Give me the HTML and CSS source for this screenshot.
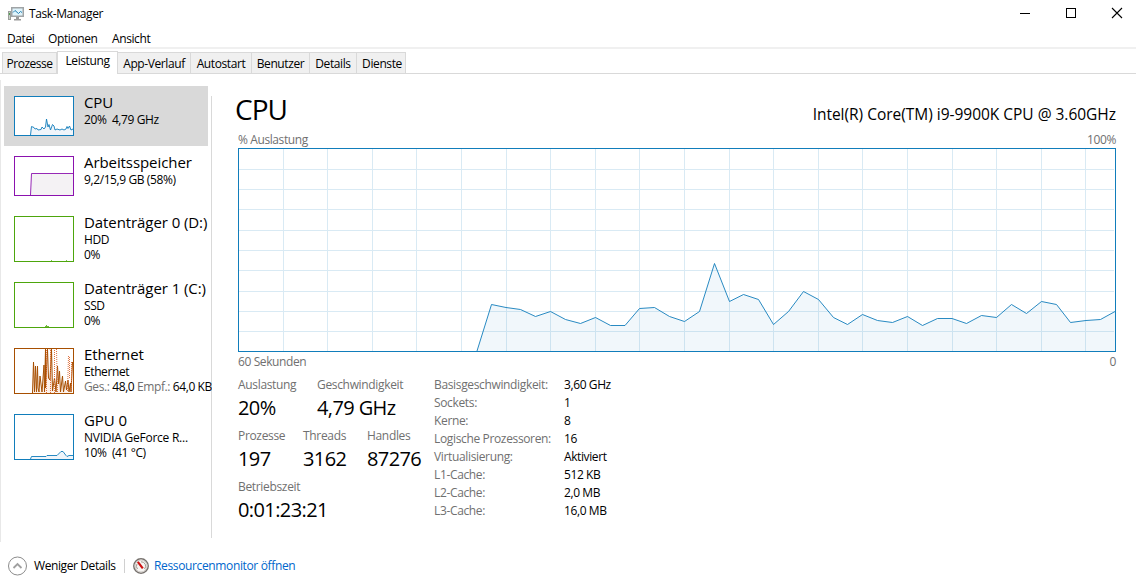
FILE: index.html
```
<!DOCTYPE html>
<html lang="de">
<head>
<meta charset="utf-8">
<title>Task-Manager</title>
<link rel="stylesheet" href="styles.css">
</head>
<body>

<div class="titlebar">
  <svg class="appicon" width="16" height="14" viewBox="0 0 16 14">
    <rect x="0.5" y="4.5" width="2" height="8" fill="#c9cfc9" stroke="#9a9f9a"/>
    <rect x="1" y="6" width="1" height="2" fill="#4fa04f"/>
    <rect x="3.75" y="0.75" width="11.5" height="8.5" fill="#dff3fb" stroke="#a0a4a6" stroke-width="1.5"/>
    <path d="M5 5.5 L7 3.5 L10.5 6.5 L12.5 4.5 L14 5.5" fill="none" stroke="#2582b5"/>
    <path d="M8 10 H11 V12 H13 V13.5 H6 V12 H8 Z" fill="#9a9a9a"/>
  </svg>
  <span class="title">Task-Manager</span>
  <div class="winbuttons">
    <svg width="12" height="12" viewBox="0 0 12 12"><path d="M1 6.5 H11" stroke="#000"/></svg>
    <svg width="12" height="12" viewBox="0 0 12 12"><rect x="1.5" y="1.5" width="9" height="9" fill="none" stroke="#000"/></svg>
    <svg width="12" height="12" viewBox="0 0 12 12"><path d="M1 1 L11 11 M11 1 L1 11" stroke="#000" stroke-width="1.1"/></svg>
  </div>
</div>

<div class="menu">
  <span class="m1">Datei</span>
  <span class="m2">Optionen</span>
  <span class="m3">Ansicht</span>
</div>

<div class="tabs">
  <button class="tab t1">Prozesse</button>
  <button class="tab t2 active">Leistung</button>
  <button class="tab t3">App-Verlauf</button>
  <button class="tab t4">Autostart</button>
  <button class="tab t5">Benutzer</button>
  <button class="tab t6">Details</button>
  <button class="tab t7">Dienste</button>
</div>

<div class="content">
  <div class="sidebar">
    <div class="item selected">
      <svg class="thumb" width="60" height="40" viewBox="0 0 60 40">
        <rect x="0.5" y="0.5" width="59" height="39" fill="#fff"/>
        <path d="M16.5 39 L17.5 30.5 L20 31.5 L21 33 L23 32.5 L24 34 L27 33.5 L28 31 L30 33 L31.5 31 L32.5 23 L34 31 L35 28.5 L36.5 34 L38.5 28.5 L40 30 L41 34 L43 33 L46 34 L48 33 L50 34 L52 33 L53 30.5 L54 32.5 L55.5 30 L57 34 L59 33 V39 Z" fill="#f0f5fa"/>
        <path d="M16.5 39 L17.5 30.5 L20 31.5 L21 33 L23 32.5 L24 34 L27 33.5 L28 31 L30 33 L31.5 31 L32.5 23 L34 31 L35 28.5 L36.5 34 L38.5 28.5 L40 30 L41 34 L43 33 L46 34 L48 33 L50 34 L52 33 L53 30.5 L54 32.5 L55.5 30 L57 34 L59 33" fill="none" stroke="#117dbb" stroke-width="0.9"/>
        <rect x="0.5" y="0.5" width="59" height="39" fill="none" stroke="#117dbb"/>
      </svg>
      <div class="info"><h3>CPU</h3><p>20%&nbsp; 4,79 GHz</p></div>
    </div>
    <div class="item">
      <svg class="thumb" width="60" height="40" viewBox="0 0 60 40">
        <path d="M16.5 39 L17.5 17.5 H59 V39 Z" fill="#f4f2f4"/>
        <path d="M16.5 39 L17.5 17.5 H59" fill="none" stroke="#8b12ae" stroke-width="0.9"/>
        <rect x="0.5" y="0.5" width="59" height="39" fill="none" stroke="#8b12ae"/>
      </svg>
      <div class="info"><h3>Arbeitsspeicher</h3><p>9,2/15,9 GB (58%)</p></div>
    </div>
    <div class="item">
      <svg class="thumb" width="60" height="46" viewBox="0 0 60 46">
        <path d="M37 44.5 H38 M52 44.5 H53" stroke="#4da60c" opacity="0.7"/>
        <rect x="0.5" y="0.5" width="59" height="45" fill="none" stroke="#4da60c"/>
      </svg>
      <div class="info"><h3>Datenträger 0 (D:)</h3><p>HDD</p><p>0%</p></div>
    </div>
    <div class="item">
      <svg class="thumb" width="60" height="46" viewBox="0 0 60 46">
        <path d="M31 44.5 H35 M32.5 43 V45" stroke="#4da60c" opacity="0.8"/>
        <rect x="0.5" y="0.5" width="59" height="45" fill="none" stroke="#4da60c"/>
      </svg>
      <div class="info"><h3>Datenträger 1 (C:)</h3><p>SSD</p><p>0%</p></div>
    </div>
    <div class="item">
      <svg class="thumb" width="60" height="46" viewBox="0 0 60 46">
        <path d="M18 45 L19.5 14 L21 18 L22 44 L23 18 L25 44 L26 28 L28 44 L30 17 L31 30 L32 1 L34 25 L35 32 L36 2 H38 L39 40 L41 44 L43 18 L45 30 L46 44 L48 28 L50 44 L53 34 L55 44 L58 20 V45 Z" fill="#fcf1ea"/>
        <path d="M18.5 45 L19.5 14 L20.5 44 L21.5 18 L22.5 44 L23.5 18 L24 40 L25 44 L26 28 L28 44 L30 17 L30.5 44 L31.5 1 V40 L33.5 1 L34.5 30 L36 32 L37.5 1 L38.5 43 L40.5 30 L42 44 L43.5 18 L44.5 36 L45.5 23 L46.5 44 L48.5 28 L49.5 44 L51.5 33 L52.5 42 L54 32 L55 44 L56.5 35 L57 44 L58.5 14" fill="none" stroke="#a74f01"/>
        <path d="M32.5 45 V1 M36.5 45 V1 H35 M40.5 45 V1 M42.5 1 L43.5 44 M54.5 8 L53.5 44 M55.5 9 V30 M57.5 14 V44" fill="none" stroke="#e0703c" stroke-dasharray="1 1"/>
        <rect x="0.5" y="0.5" width="59" height="45" fill="none" stroke="#a74f01"/>
      </svg>
      <div class="info"><h3>Ethernet</h3><p>Ethernet</p><p><i>Ges.:</i> 48,0 <i>Empf.:</i> 64,0 KB</p></div>
    </div>
    <div class="item">
      <svg class="thumb" width="60" height="46" viewBox="0 0 60 46">
        <path d="M16.5 45 L17.5 42.5 H32 L33 41.5 H43 L47 37.5 H49 L52 41.5 L53 42.5 L55 41.5 H59 V45 Z" fill="#f0f5fa"/>
        <path d="M16.5 45 L17.5 42.5 H32 L33 41.5 H43 L47 37.5 H49 L52 41.5 L53 42.5 L55 41.5 H59" fill="none" stroke="#117dbb" stroke-width="0.9"/>
        <rect x="0.5" y="0.5" width="59" height="45" fill="none" stroke="#117dbb"/>
      </svg>
      <div class="info"><h3>GPU 0</h3><p class="gpu">NVIDIA GeForce R...</p><p>10%&nbsp; (41 °C)</p></div>
    </div>
  </div>

  <div class="main">
    <div class="heading">
      <h1>CPU</h1>
      <span class="model">Intel(R) Core(TM) i9-9900K CPU @ 3.60GHz</span>
    </div>
    <div class="axis top"><span>% Auslastung</span><span>100%</span></div>
    <svg class="chart" width="878" height="204" viewBox="0 0 878 204">
      <path class="grid" d="M45.5 1V203 M89.5 1V203 M134.5 1V203 M178.5 1V203 M223.5 1V203 M268.5 1V203 M312.5 1V203 M357.5 1V203 M401.5 1V203 M446.5 1V203 M491.5 1V203 M535.5 1V203 M580.5 1V203 M624.5 1V203 M669.5 1V203 M714.5 1V203 M758.5 1V203 M803.5 1V203 M847.5 1V203"/>
      <path class="grid" d="M1 21.5H876 M1 41.5H876 M1 61.5H876 M1 82.5H876 M1 102.5H876 M1 122.5H876 M1 143.5H876 M1 163.5H876 M1 183.5H876"/>
      <polygon class="area" points="239,203 253.5,156.5 268,159.5 282.5,161.5 297.5,168.5 312.5,163.5 327.5,171.5 342.5,175.5 357.5,169.5 372.5,177.5 387,177.5 401.5,160.5 416.5,159.5 431.5,168.5 446.5,173.5 461.5,163.5 476.5,115.5 491.5,153.5 505.5,146.5 520.5,151.5 535.5,176.5 550.5,163.5 565.5,143.5 580.5,151.5 595.5,169.5 609.5,176.5 624.5,166.5 639.5,172.5 654.5,174.5 669.5,168.5 684.5,177.5 699.5,170.5 714,170.5 728.5,175.5 743.5,167.5 758.5,169.5 773.5,156.5 788.5,165.5 803.5,153.5 818.5,156.5 832.5,174.5 848,172.5 862.5,171.5 877,163.5 877,203"/>
      <polyline class="line" points="239,203 253.5,156.5 268,159.5 282.5,161.5 297.5,168.5 312.5,163.5 327.5,171.5 342.5,175.5 357.5,169.5 372.5,177.5 387,177.5 401.5,160.5 416.5,159.5 431.5,168.5 446.5,173.5 461.5,163.5 476.5,115.5 491.5,153.5 505.5,146.5 520.5,151.5 535.5,176.5 550.5,163.5 565.5,143.5 580.5,151.5 595.5,169.5 609.5,176.5 624.5,166.5 639.5,172.5 654.5,174.5 669.5,168.5 684.5,177.5 699.5,170.5 714,170.5 728.5,175.5 743.5,167.5 758.5,169.5 773.5,156.5 788.5,165.5 803.5,153.5 818.5,156.5 832.5,174.5 848,172.5 862.5,171.5 877,163.5"/>
      <rect class="frame" x="0.5" y="0.5" width="877" height="203"/>
    </svg>
    <div class="axis bottom"><span>60 Sekunden</span><span>0</span></div>

    <div class="stats">
      <div class="numbers">
        <div class="row">
          <div class="stat w79"><label>Auslastung</label><b>20%</b></div>
          <div class="stat"><label>Geschwindigkeit</label><b>4,79 GHz</b></div>
        </div>
        <div class="row">
          <div class="stat w65"><label>Prozesse</label><b>197</b></div>
          <div class="stat w64"><label>Threads</label><b>3162</b></div>
          <div class="stat"><label>Handles</label><b>87276</b></div>
        </div>
        <div class="row">
          <div class="stat"><label>Betriebszeit</label><b>0:01:23:21</b></div>
        </div>
      </div>
      <dl class="specs">
        <dt>Basisgeschwindigkeit:</dt><dd>3,60 GHz</dd>
        <dt>Sockets:</dt><dd>1</dd>
        <dt>Kerne:</dt><dd>8</dd>
        <dt>Logische Prozessoren:</dt><dd>16</dd>
        <dt>Virtualisierung:</dt><dd>Aktiviert</dd>
        <dt>L1-Cache:</dt><dd>512 KB</dd>
        <dt>L2-Cache:</dt><dd>2,0 MB</dd>
        <dt>L3-Cache:</dt><dd>16,0 MB</dd>
      </dl>
    </div>
  </div>
</div>

<div class="footer">
  <svg width="20" height="20" viewBox="0 0 20 20">
    <circle cx="9.5" cy="10" r="9" fill="#fff" stroke="#8c8c8c"/>
    <path d="M5.5 12 L9.5 8 L13.5 12" fill="none" stroke="#a0a0a0" stroke-width="1.8"/>
  </svg>
  <span class="less">Weniger Details</span>
  <span class="sep"></span>
  <svg class="gauge" width="16" height="16" viewBox="0 0 16 16">
    <circle cx="8" cy="8" r="7.2" fill="#f7f5f3" stroke="#77726e" stroke-width="1.5"/>
    <circle cx="8" cy="8" r="6" fill="none" stroke="#cfcac6"/>
    <path d="M4.5 11 A4.3 4.3 0 0 1 4 6 M8 3.8 A4.3 4.3 0 0 1 11.5 11" fill="none" stroke="#a09a90"/>
    <path d="M4.8 3.8 L9.8 10.4" stroke="#cc1111" stroke-width="2.2"/>
  </svg>
  <a class="resmon">Ressourcenmonitor öffnen</a>
</div>

</body>
</html>
```

FILE: styles.css
```
* {
  box-sizing: border-box;
}

body {
  margin: 0;
  width: 1136px;
  height: 587px;
  overflow: hidden;
  background-color: #fff;
  color: #000;
  font-family: "Open Sans", "Noto Sans", sans-serif;
  font-size: 12px;
  letter-spacing: -0.4px;
  white-space: nowrap;
}

h1, h3, p, dl, dd {
  margin: 0;
  font-weight: normal;
}

/* Title bar */
.titlebar {
  display: flex;
  align-items: center;
  height: 28px;
  padding-left: 8px;
}

.title {
  margin-left: 5px;
  padding-bottom: 1px;
}

.winbuttons {
  display: flex;
  gap: 34px;
  margin-left: auto;
  padding-right: 13px;
  padding-bottom: 2px;
}

.menu {
  display: flex;
  height: 21px;
  padding-left: 7px;
  line-height: 22px;
  border-bottom: 2px solid #f0f0f0;
}

.m1 {
  width: 41px;
}

.m2 {
  width: 64px;
}

/* Tabs */
.tabs {
  display: flex;
  align-items: flex-end;
  height: 25px;
  padding-left: 2px;
  border-bottom: 1px solid #d9d9d9;
}

.tab {
  height: 21px;
  padding: 2px 0 0;
  border: 1px solid #d9d9d9;
  border-left: none;
  border-bottom: none;
  background-color: #f0f0f0;
  color: #000;
  font: inherit;
  letter-spacing: inherit;
  line-height: 18px;
  text-align: center;
}

.tab.active {
  height: 23px;
  margin-bottom: -1px;
  padding: 0 0 4px;
  border-left: 1px solid #d9d9d9;
  background-color: #fff;
}

.t1 {
  width: 55px;
  border-left: 1px solid #d9d9d9;
  letter-spacing: -0.5px;
}

.t2 {
  width: 61px;
}

.t3 {
  width: 73px;
}

.t4 {
  width: 61px;
}

.t5 {
  width: 58px;
}

.t6 {
  width: 47px;
}

.t7 {
  width: 49px;
  padding-left: 2px;
}

.content {
  display: flex;
  height: 468px;
  margin-top: 6px;
}

/* Resource list on the left */
.sidebar {
  width: 212px;
  height: 462px;
  padding: 6px 0 0 3px;
  overflow: hidden;
  border-left: 1px solid #e8e8e8;
  background: linear-gradient(#d9d9d9, #d9d9d9) 210px 16px / 1px 442px no-repeat;
}

.item {
  display: flex;
  align-items: flex-start;
  padding: 10px;
  width: 204px;
}

.item.selected {
  background-color: #d9d9d9;
}

.thumb {
  display: block;
  flex: none;
}

.info {
  height: 40px;
  margin-left: 10px;
}

.item:nth-child(n+3) .info {
  height: 46px;
}

.info h3 {
  margin-top: -3px;
  font-size: 15px;
  line-height: 19px;
  letter-spacing: -0.08px;
}

.info p {
  line-height: 15px;
}

.info .gpu {
  letter-spacing: -0.25px;
}

.info i {
  font-style: normal;
  color: #707070;
}

/* Graph area */
.main {
  width: 878px;
  margin-left: 26px;
}

.heading {
  display: flex;
  align-items: baseline;
  justify-content: space-between;
  height: 52px;
  padding-top: 10px;
}

.heading h1 {
  margin-left: -3px;
  font-size: 28px;
  line-height: 38px;
  letter-spacing: -1px;
}

.model {
  font-size: 15.5px;
  letter-spacing: -0.02px;
}

.axis {
  display: flex;
  justify-content: space-between;
  height: 16px;
  line-height: 16px;
  color: #707070;
}

.chart {
  display: block;
}

.grid {
  stroke: #d9eaf4;
  fill: none;
}

.area {
  fill: #117dbb;
  fill-opacity: 0.06;
}

.line {
  fill: none;
  stroke: #117dbb;
  stroke-width: 0.9;
}

.frame {
  fill: none;
  stroke: #117dbb;
}

.bottom {
  height: 24px;
  line-height: 19px;
}

/* Figures below the graph */
.stats {
  display: flex;
}

.numbers {
  width: 196px;
}

.row {
  display: flex;
  height: 51px;
}

.stat label {
  display: block;
  line-height: 18px;
  letter-spacing: -0.33px;
  color: #707070;
}

.stat b {
  display: block;
  font-size: 20px;
  font-weight: normal;
  line-height: 28px;
  letter-spacing: -0.6px;
}

.w79 {
  width: 79px;
}

.w65 {
  width: 65px;
}

.w64 {
  width: 64px;
}

.specs {
  display: grid;
  grid-template-columns: 130px auto;
  grid-auto-rows: 18px;
  line-height: 18px;
}

.specs dt {
  letter-spacing: -0.35px;
  color: #707070;
}

/* Footer */
.footer {
  display: flex;
  align-items: center;
  height: 36px;
  padding-left: 8px;
}

.less {
  margin-left: 6px;
  padding-bottom: 1px;
  width: 90px;
}

.sep {
  width: 1px;
  height: 14px;
  background-color: #d0d0d0;
}

.gauge {
  margin-left: 8px;
}

.resmon {
  margin-left: 5px;
  padding-bottom: 1px;
  letter-spacing: -0.36px;
  color: #0066cc;
}
```
